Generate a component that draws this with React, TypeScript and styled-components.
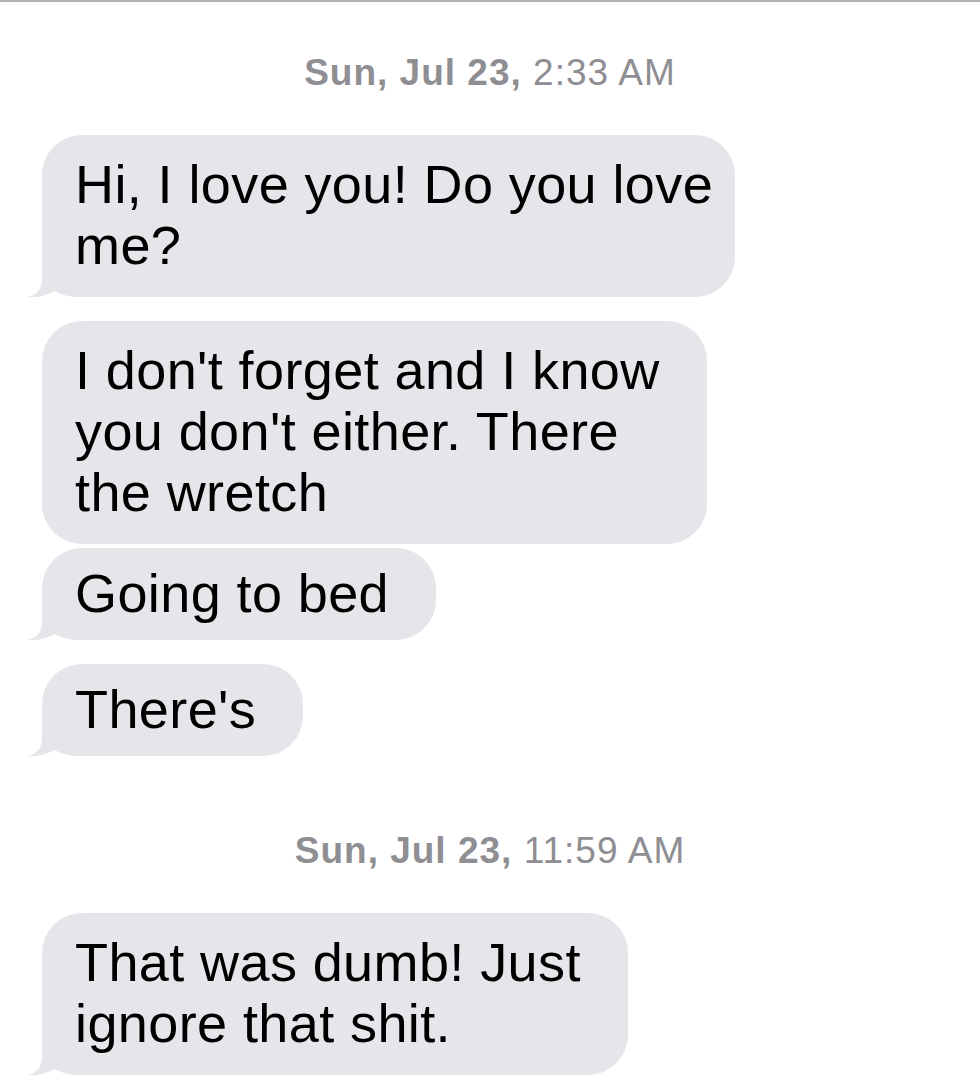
import React from 'react';
import styled, { createGlobalStyle } from 'styled-components';

const GlobalStyle = createGlobalStyle`
  html, body {
    margin: 0;
    padding: 0;
    background: #ffffff;
  }
  body {
    font-family: "Liberation Sans", Arial, Helvetica, sans-serif;
  }
`;

const Screen = styled.div`
  width: 980px;
  min-height: 1079px;
  background: #ffffff;
  border-top: 2px solid #b1b1b1;
  box-sizing: border-box;
  overflow: hidden;
`;

const Thread = styled.div`
  display: flex;
  flex-direction: column;
  padding: 0 0 0 42px;
`;

const Section = styled.section<{ $gapAbove: number }>`
  display: flex;
  flex-direction: column;
  margin-top: ${(p) => p.$gapAbove}px;
`;

const Timestamp = styled.div`
  align-self: stretch;
  margin-left: -42px;
  text-align: center;
  font-size: 37px;
  line-height: 44px;
  letter-spacing: 1px;
  color: #8e8e93;
  margin-bottom: 40px;

  b {
    font-weight: 700;
  }
`;

const Groups = styled.div`
  display: flex;
  flex-direction: column;
  align-items: flex-start;
  gap: 24px;
`;

const Group = styled.div`
  display: flex;
  flex-direction: column;
  align-items: flex-start;
  gap: 4px;
`;

const Bubble = styled.div<{ $single: boolean }>`
  position: relative;
  box-sizing: border-box;
  max-width: 693px;
  background: #e5e5ea;
  color: #000000;
  border-radius: 40px;
  padding: ${(p) => (p.$single ? '15px 47px 16px 33px' : '19px 47px 21px 33px')};
  font-size: 54px;
  line-height: 61px;
  letter-spacing: 0.4px;
  white-space: nowrap;
`;

const Line = styled.span`
  position: relative;
  z-index: 1;
  display: block;
`;

const Tail = styled.svg`
  position: absolute;
  z-index: 0;
  left: -14px;
  bottom: 0;
  width: 52px;
  height: 40px;
  display: block;
`;

type Message = { lines: string[]; tail: boolean };

const sections: { date: string; time: string; gapAbove: number; groups: Message[][] }[] = [
  {
    date: 'Sun, Jul 23,',
    time: '2:33 AM',
    gapAbove: 49,
    groups: [
      [{ lines: ['Hi, I love you! Do you love', 'me?'], tail: true }],
      [
        { lines: ["I don't forget and I know", "you don't either. There", 'the wretch'], tail: false },
        { lines: ['Going to bed'], tail: true },
      ],
      [{ lines: ["There's"], tail: true }],
    ],
  },
  {
    date: 'Sun, Jul 23,',
    time: '11:59 AM',
    gapAbove: 73,
    groups: [[{ lines: ['That was dumb! Just', 'ignore that shit.'], tail: true }]],
  },
];

const BubbleTail: React.FC = () => (
  <Tail viewBox="0 0 52 40" aria-hidden="true">
    <path
      d="M14 0 L14 22 C14 32 9 38 0 40 C10 41 19 38 27 34 C34 38 42 40 52 40 L52 0 Z"
      fill="#e5e5ea"
    />
  </Tail>
);

const App: React.FC = () => {
  return (
    <Screen>
      <GlobalStyle />
      <Thread>
        {sections.map((section, si) => (
          <Section key={si} $gapAbove={section.gapAbove}>
            <Timestamp>
              <b>{section.date}</b> {section.time}
            </Timestamp>
            <Groups>
              {section.groups.map((group, gi) => (
                <Group key={gi}>
                  {group.map((msg, mi) => (
                    <Bubble key={mi} $single={msg.lines.length === 1}>
                      {msg.tail && <BubbleTail />}
                      {msg.lines.map((line, li) => (
                        <Line key={li}>{line}</Line>
                      ))}
                    </Bubble>
                  ))}
                </Group>
              ))}
            </Groups>
          </Section>
        ))}
      </Thread>
    </Screen>
  );
};

export default App;
